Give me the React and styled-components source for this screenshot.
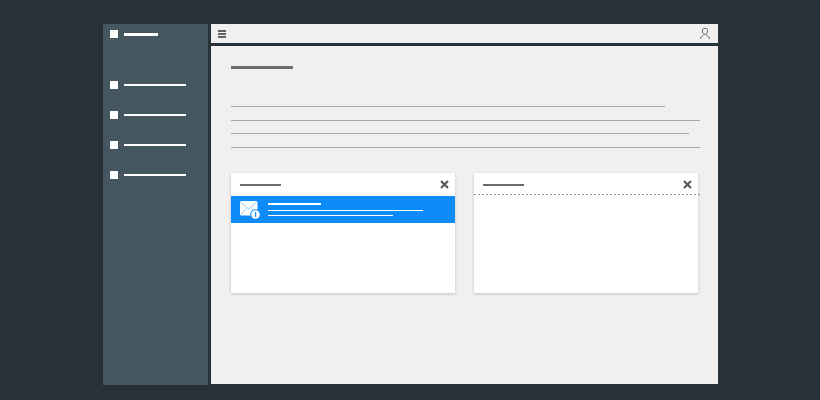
import React from "react";
import styled, { createGlobalStyle } from "styled-components";

const navItems = [
  { id: "home", width: 34, gap: 43, thick: true },
  { id: "inbox", width: 62, gap: 22 },
  { id: "sent", width: 62, gap: 22 },
  { id: "drafts", width: 62, gap: 22 },
  { id: "trash", width: 62, gap: 0 },
];

const paragraphLines = [434, 469, 458, 469];

const GlobalStyle = createGlobalStyle`
  html, body {
    margin: 0;
    padding: 0;
    background: #273238;
    font-family: "Liberation Sans", Arial, sans-serif;
  }
`;

const Page = styled.div`
  display: flex;
  width: 820px;
  height: 400px;
  box-sizing: border-box;
  padding: 24px 102px 15px 103px;
  gap: 3px;
`;

const Sidebar = styled.nav`
  flex: 0 0 105px;
  height: 361px;
  box-sizing: border-box;
  padding: 6px 0 0 7px;
  background: #44565f;
  display: flex;
  flex-direction: column;
`;

const NavItem = styled.div`
  display: flex;
  align-items: center;
  gap: 6px;
  height: 8px;
  margin-bottom: ${(p) => p.$gap}px;
`;

const NavSquare = styled.span`
  width: 8px;
  height: 8px;
  background: #fff;
`;

const NavLabel = styled.span`
  width: ${(p) => p.$width}px;
  height: ${(p) => (p.$thick ? 3 : 2)}px;
  background: #fff;
`;

const Main = styled.main`
  flex: 1;
  height: 360px;
  display: flex;
  flex-direction: column;
  background: #f1efef;
`;

const TopBar = styled.header`
  flex: 0 0 19px;
  display: flex;
  align-items: center;
  justify-content: space-between;
  padding: 0 8px 0 7px;
  border-bottom: 3px solid #273238;
`;

const Content = styled.section`
  flex: 1;
  padding: 20px 18px 0 20px;
`;

const Heading = styled.div`
  width: 62px;
  height: 3px;
  background: #6f6f6f;
  margin-bottom: 37px;
`;

const Paragraph = styled.div`
  display: flex;
  flex-direction: column;
  gap: 12.67px;
  margin-bottom: 25px;
`;

const Line = styled.div`
  width: ${(p) => p.$width}px;
  height: 1px;
  background: #a9a9a9;
`;

const Cards = styled.div`
  display: flex;
  gap: 19px;
`;

const Card = styled.article`
  width: 224px;
  height: 120px;
  background: #fff;
  box-shadow: 0 1px 3px rgba(0, 0, 0, 0.2);
`;

const CardHeader = styled.div`
  height: 19px;
  padding: 2px 6px 0 9px;
  display: flex;
  align-items: center;
  justify-content: space-between;
  position: relative;
  ${(p) =>
    p.$dashed
      ? `&::after {
          content: "";
          position: absolute;
          left: 0;
          right: -2px;
          bottom: -1px;
          height: 1px;
          background: repeating-linear-gradient(90deg, #8f8f8f 0 2px, transparent 2px 4px);
        }`
      : "border-bottom: 1px solid #eeeeee;"}
`;

const CardTitle = styled.span`
  width: 41px;
  height: 2px;
  margin-top: 1px;
  background: #6b6b6b;
`;

const MessageRow = styled.div`
  margin-top: 1px;
  height: 27px;
  background: #0d8bf9;
  display: flex;
  align-items: flex-start;
  gap: 8px;
  padding: 5px 0 0 9px;
  box-sizing: border-box;
`;

const MessageLines = styled.div`
  display: flex;
  flex-direction: column;
  gap: 4px;
  padding-top: 2px;
`;

const MessageLine = styled.span`
  display: block;
  width: ${(p) => p.$width}px;
  height: ${(p) => (p.$strong ? 2 : 1)}px;
  margin-bottom: ${(p) => (p.$strong ? 1 : 0)}px;
  background: #fff;
`;

const MenuIcon = () => (
  <svg width="8" height="8" viewBox="0 0 8 8">
    <path d="M0 0h8v2H0zM0 3h8v2H0zM0 6h8v2H0z" fill="#666" />
  </svg>
);

const UserIcon = () => (
  <svg width="10" height="11" viewBox="0 0 10 11" fill="none" stroke="#6f6f6f" strokeWidth="1">
    <path d="M2.5 1.2Q2.7.5 3.5.5h3q.9 0 .9 1v2.7L6.3 6.3H3.7L2.5 4.2z" />
    <path d="M.5 11V9.6L3.5 7.4M9.5 11V9.6L6.5 7.4" />
  </svg>
);

const CloseIcon = () => (
  <svg width="9" height="9" viewBox="0 0 9 9">
    <path d="M1 1l7 7M8 1L1 8" stroke="#555" strokeWidth="2" />
  </svg>
);

const MailIcon = () => (
  <svg width="20" height="19" viewBox="0 0 20 19">
    <rect x="0" y="0" width="17.5" height="14.5" rx="1.5" fill="#fff" />
    <path d="M1 1.5l7.7 6.5 7.7-6.5M1 13.5l5.5-6.5M16.5 13.5L11 7" fill="none" stroke="#7cc0fb" strokeWidth="0.8" />
    <circle cx="15.5" cy="13.5" r="5.3" fill="#0d8bf9" />
    <circle cx="15.5" cy="13.5" r="4.3" fill="#fff" />
    <rect x="15" y="11" width="1.2" height="5" fill="#0d8bf9" />
  </svg>
);

const App = () => (
  <>
    <GlobalStyle />
    <Page>
      <Sidebar>
        {navItems.map((item) => (
          <NavItem key={item.id} $gap={item.gap}>
            <NavSquare />
            <NavLabel $width={item.width} $thick={item.thick} />
          </NavItem>
        ))}
      </Sidebar>
      <Main>
        <TopBar>
          <MenuIcon />
          <UserIcon />
        </TopBar>
        <Content>
          <Heading />
          <Paragraph>
            {paragraphLines.map((w, i) => (
              <Line key={i} $width={w} />
            ))}
          </Paragraph>
          <Cards>
            <Card>
              <CardHeader>
                <CardTitle />
                <CloseIcon />
              </CardHeader>
              <MessageRow>
                <MailIcon />
                <MessageLines>
                  <MessageLine $width={53} $strong />
                  <MessageLine $width={155} />
                  <MessageLine $width={125} />
                </MessageLines>
              </MessageRow>
            </Card>
            <Card>
              <CardHeader $dashed>
                <CardTitle />
                <CloseIcon />
              </CardHeader>
            </Card>
          </Cards>
        </Content>
      </Main>
    </Page>
  </>
);

export default App;
